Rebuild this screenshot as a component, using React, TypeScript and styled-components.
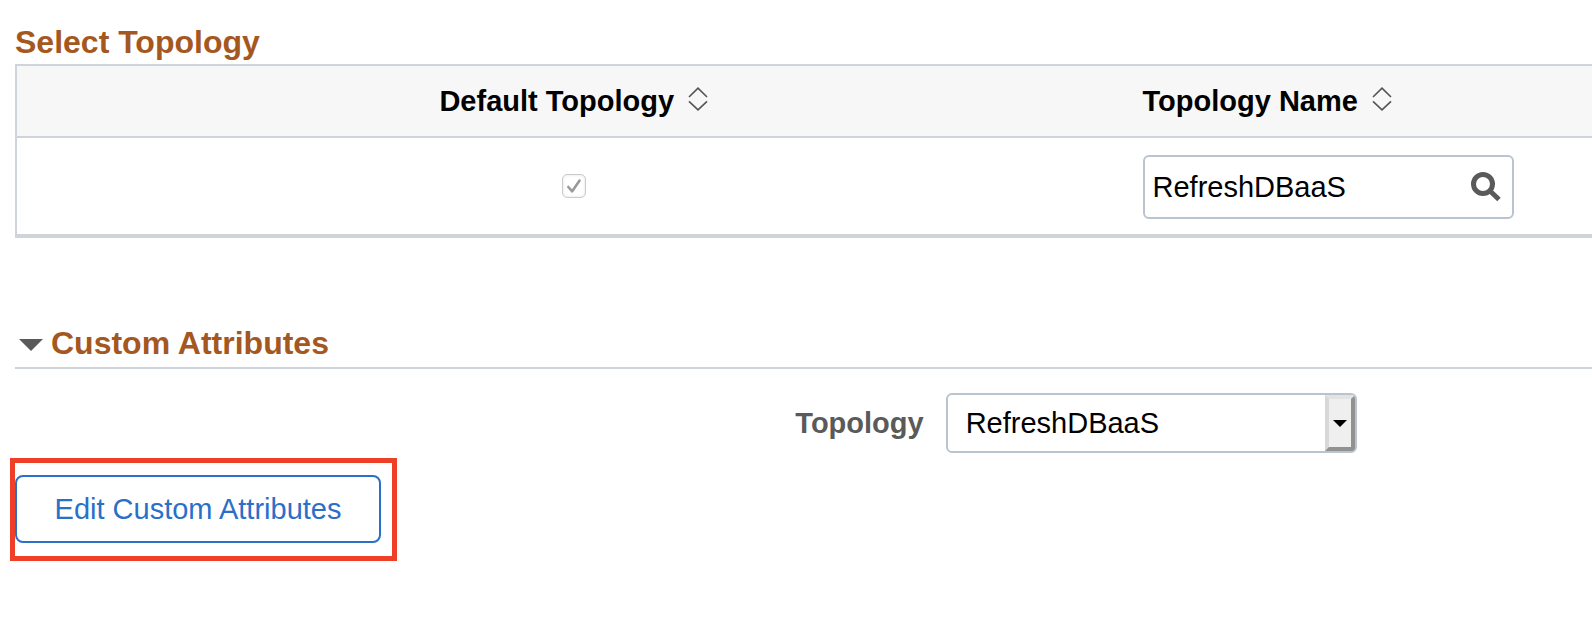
import React from "react";
import styled, { createGlobalStyle } from "styled-components";

const GlobalStyle = createGlobalStyle`
  *, *::before, *::after { box-sizing: border-box; }
  body {
    margin: 0;
    background: #fff;
    color: #000;
    font-family: "Liberation Sans", Arial, Helvetica, sans-serif;
    font-size: 29px;
    line-height: 36px;
    overflow-x: hidden;
  }
  input, select, button { font: inherit; margin: 0; }
`;

const Page = styled.main`
  padding: 24px 0 24px 15px;
`;

const Heading = styled.h2`
  margin: 0;
  color: #a4571e;
  font-size: 32px;
  line-height: 36px;
  font-weight: 700;
`;

const Grid = styled.table`
  width: 100%;
  margin-top: 4px;
  border-collapse: separate;
  border-spacing: 0;
  table-layout: fixed;
  border: solid #cfd4db;
  border-width: 2px 0 4px 2px;
`;

const HeaderCell = styled.th<{ $center?: boolean }>`
  width: ${(p) => (p.$center ? "70.7%" : "auto")};
  height: 72px;
  padding: 0 12px;
  background: #f7f7f7;
  border-bottom: 2px solid #cfd4db;
  text-align: ${(p) => (p.$center ? "center" : "left")};
`;

const Cell = styled.td`
  height: 96px;
  padding: 0 12px;
`;

const SortButton = styled.button`
  display: inline-flex;
  align-items: center;
  gap: 14px;
  padding: 0;
  border: 0;
  background: none;
  color: inherit;
  font-weight: 700;
  white-space: nowrap;

  svg { margin-bottom: 4px; }
`;

const CheckWrap = styled.div`
  position: relative;
  width: 24px;
  height: 24px;
  margin: 0 auto;

  svg {
    position: absolute;
    inset: 0;
    pointer-events: none;
  }
`;

const Checkbox = styled.input`
  appearance: none;
  display: block;
  width: 24px;
  height: 24px;
  border: 1px solid #cccccc;
  border-radius: 5px;
  background: #fff;
  box-shadow: inset 0 0 3px #dddddd;
`;

const LookupBox = styled.div`
  display: flex;
  align-items: center;
  width: 371px;
  height: 64px;
  margin-top: 2px;
  border: 2px solid #b9c4d0;
  border-radius: 6px;
  background: #fff;
`;

const LookupInput = styled.input`
  flex: 1;
  min-width: 0;
  height: 100%;
  padding: 0 0 0 8px;
  border: 0;
  background: none;
  color: #000;
`;

const LookupButton = styled.button`
  display: flex;
  padding: 0 11px;
  border: 0;
  background: none;
`;

const Section = styled.section`
  margin-top: 87px;
`;

const SectionHeader = styled.div`
  padding-bottom: 6px;
  border-bottom: 2px solid #cfd4db;
`;

const Toggle = styled.button`
  display: flex;
  align-items: center;
  gap: 8px;
  padding: 0 0 0 4px;
  border: 0;
  background: none;
  color: inherit;

  svg { margin-top: 4px; }
`;

const Field = styled.div`
  display: flex;
  align-items: center;
  margin-top: 24px;
`;

const Label = styled.label`
  flex: 0 0 58%;
  padding-right: 6px;
  color: #5a5a5a;
  font-weight: 700;
  text-align: right;
`;

const SelectWrap = styled.div`
  position: relative;
  width: 411px;
  margin-left: 16px;
`;

const Select = styled.select`
  appearance: none;
  display: block;
  width: 100%;
  height: 60px;
  padding: 0 40px 0 18px;
  border: 2px solid #b9c4d0;
  border-radius: 6px;
  background: #fff;
  color: #000;
`;

const SelectArrow = styled.span`
  position: absolute;
  top: 2px;
  right: 2px;
  bottom: 2px;
  display: flex;
  align-items: center;
  justify-content: center;
  width: 30px;
  border: 4px solid;
  border-color: #e3e3e3 #919191 #919191 #d8d8d8;
  border-radius: 0 4px 4px 0;
  background: #efefef;
  pointer-events: none;
`;

const Highlight = styled.div`
  display: inline-flex;
  margin: 5px 0 0 -5px;
  padding: 12px 11px 13px 0;
  border: 5px solid #ee4026;
  vertical-align: top;
`;

const ActionButton = styled.button`
  min-width: 366px;
  height: 68px;
  padding: 0 36px;
  border: 2px solid #2a70c8;
  border-radius: 8px;
  background: #fff;
  color: #2a70c8;
  white-space: nowrap;
`;

const SortIcon = () => (
  <svg width="20" height="24" viewBox="0 0 20 24" fill="none" stroke="#555" strokeWidth="1.6" aria-hidden="true">
    <path d="M1 10 10 1.2 19 10M1 14.3 10 22.8 19 14.3" />
  </svg>
);

export default function App() {
  return (
    <>
      <GlobalStyle />
      <Page>
        <Heading id="select-topology">Select Topology</Heading>
        <Grid aria-labelledby="select-topology">
          <thead>
            <tr>
              <HeaderCell scope="col" $center>
                <SortButton type="button">Default Topology<SortIcon /></SortButton>
              </HeaderCell>
              <HeaderCell scope="col">
                <SortButton type="button">Topology Name<SortIcon /></SortButton>
              </HeaderCell>
            </tr>
          </thead>
          <tbody>
            <tr>
              <Cell>
                <CheckWrap>
                  <Checkbox type="checkbox" aria-label="Default Topology" checked disabled readOnly />
                  <svg width="24" height="24" viewBox="0 0 24 24" fill="none" stroke="#999" strokeWidth="2.6" strokeLinecap="round" strokeLinejoin="round" aria-hidden="true">
                    <path d="M6.3 13 10.2 17.3 17.6 6.5" />
                  </svg>
                </CheckWrap>
              </Cell>
              <Cell>
                <LookupBox>
                  <LookupInput type="text" aria-label="Topology Name" defaultValue="RefreshDBaaS" />
                  <LookupButton type="button" aria-label="Look up Topology Name">
                    <svg width="30" height="30" viewBox="0 0 30 30" fill="none" stroke="#5a5a5a" aria-hidden="true">
                      <circle cx="12" cy="12" r="9.5" strokeWidth="5" />
                      <path d="M18.5 18.5 28 27.5" strokeWidth="5" />
                    </svg>
                  </LookupButton>
                </LookupBox>
              </Cell>
            </tr>
          </tbody>
        </Grid>

        <Section>
          <SectionHeader>
            <Heading>
              <Toggle type="button" aria-expanded="true">
                <svg width="24" height="12" viewBox="0 0 24 12" aria-hidden="true">
                  <path d="M0 0H24L12 12Z" fill="#5a5a5a" />
                </svg>
                Custom Attributes
              </Toggle>
            </Heading>
          </SectionHeader>
          <Field>
            <Label htmlFor="topology">Topology</Label>
            <SelectWrap>
              <Select id="topology" defaultValue="RefreshDBaaS">
                <option>RefreshDBaaS</option>
              </Select>
              <SelectArrow>
                <svg width="14" height="7" viewBox="0 0 14 7" aria-hidden="true">
                  <path d="M0 0H14L7 7Z" fill="#000" />
                </svg>
              </SelectArrow>
            </SelectWrap>
          </Field>
          <Highlight>
            <ActionButton type="button">Edit Custom Attributes</ActionButton>
          </Highlight>
        </Section>
      </Page>
    </>
  );
}
